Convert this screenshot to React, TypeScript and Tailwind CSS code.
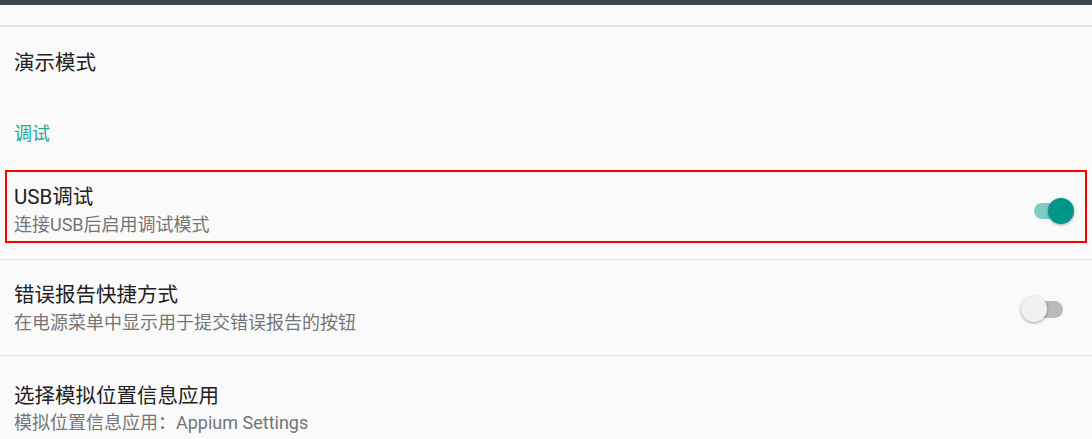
import React from "react";

const font = { fontFamily: 'Roboto, "Noto Sans CJK SC", sans-serif' };

function Toggle({ on }: { on: boolean }) {
  return on ? (
    <div className="relative w-[42px] h-[26px]">
      <div className="absolute left-[2px] top-[5px] w-[38px] h-[16px] rounded-full bg-[#80cbc4]" />
      <div className="absolute right-0 top-0 w-[26px] h-[26px] rounded-full bg-[#009688] shadow-[0_1px_3px_rgba(0,0,0,0.35)]" />
    </div>
  ) : (
    <div className="relative w-[42px] h-[26px]">
      <div className="absolute right-0 top-[5px] w-[38px] h-[17px] rounded-full bg-[#bababa]" />
      <div className="absolute left-0 top-0 w-[26px] h-[26px] rounded-full bg-[#f1f1f1] shadow-[0_1px_3px_rgba(0,0,0,0.35)]" />
    </div>
  );
}

export default function App() {
  return (
    <div className="w-[1092px] h-[439px] bg-[#fafafa] overflow-hidden" style={font}>
      <div className="h-[5px] bg-[#37474f]" />
      <div className="h-[20px]" />
      <div className="h-[1px] bg-[#dcdcdc]" />
      <div className="h-[1px] bg-[#ececec]" />
      <div className="h-[70px] flex items-center pl-[14px] pt-[3px] text-[20.5px] text-[#212121]">演示模式</div>
      <div className="h-[70px] flex items-center pl-[14px] pt-[3px] text-[18px] text-[#26a69a]">调试</div>
      <div className="h-[3px]" />
      <div className="mx-[5px] h-[73px] border-2 border-[#ff0000] flex items-center justify-between pl-[7px] pr-[11px]">
        <div className="flex flex-col pt-[7px]">
          <div className="text-[20.5px] leading-[24px] text-[#212121]">USB调试</div>
          <div className="text-[18px] leading-[22px] mt-[5px] text-[#757575]">连接USB后启用调试模式</div>
        </div>
        <div className="mt-[8px]">
          <Toggle on />
        </div>
      </div>
      <div className="h-[16px]" />
      <div className="h-[1px] bg-[#e0e0e0]" />
      <div className="h-[95px] flex items-center justify-between pl-[14px] pr-[29px]">
        <div className="flex flex-col mt-[2px]">
          <div className="text-[20.5px] leading-[24px] text-[#212121]">错误报告快捷方式</div>
          <div className="text-[18px] leading-[22px] mt-[5px] text-[#757575]">在电源菜单中显示用于提交错误报告的按钮</div>
        </div>
        <div className="mt-[2px]">
          <Toggle on={false} />
        </div>
      </div>
      <div className="h-[1px] bg-[#e0e0e0]" />
      <div className="flex flex-col pl-[14px] pt-[28px]">
        <div className="text-[20.5px] leading-[24px] text-[#212121]">选择模拟位置信息应用</div>
        <div className="text-[18px] leading-[22px] mt-[4px] text-[#757575]">模拟位置信息应用：Appium Settings</div>
      </div>
    </div>
  );
}
